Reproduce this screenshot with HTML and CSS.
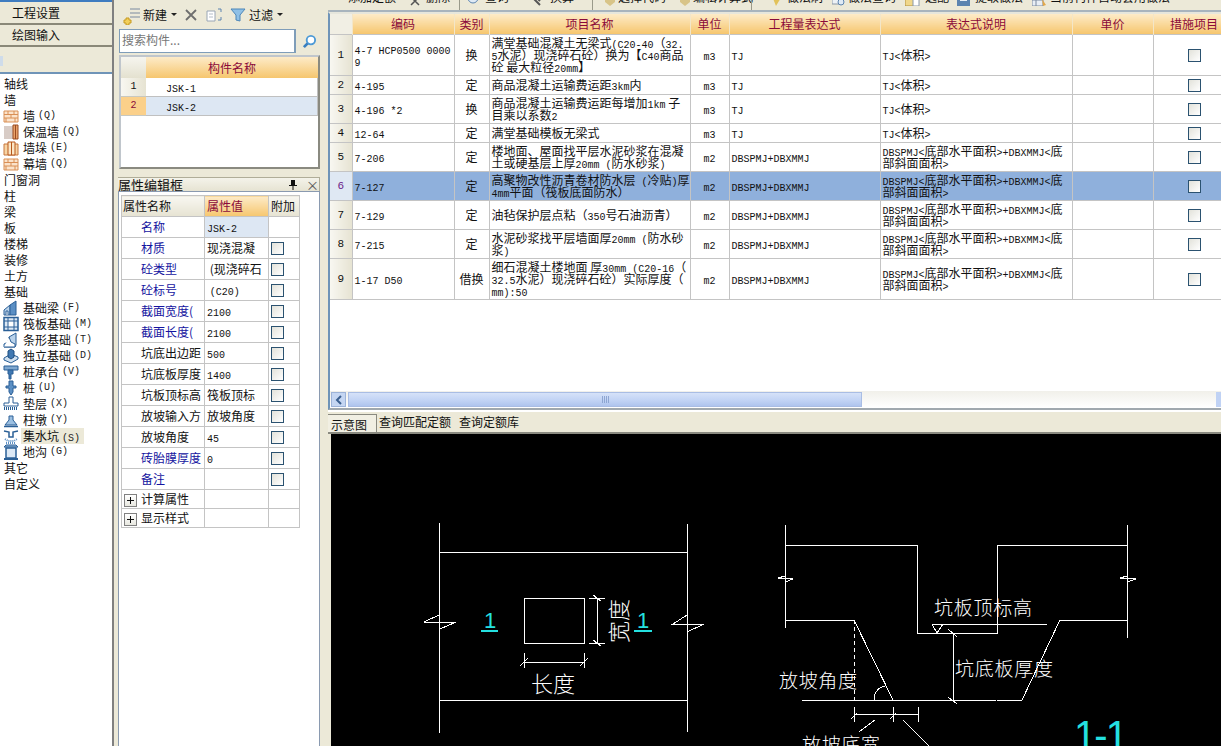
FILE: index.html
```html
<!DOCTYPE html>
<html lang="zh">
<head>
<meta charset="utf-8">
<title>集水坑</title>
<link rel="stylesheet" href="styles.css">
</head>
<body>
<div class="app">
<aside class="left">
  <div class="nav-tab nav-tab-a">工程设置</div>
  <div class="nav-tab nav-tab-b">绘图输入</div>
  <div class="nav-band"><span class="nav-mini"></span></div>
  <ul class="tree">
    <li>轴线</li>
    <li>墙</li>
    <li class="sub"><svg class="ti" viewBox="0 0 16 16"><path d="M1 3h14v11H1z" fill="#fbe3cb" stroke="#d98f55"/><path d="M1 6.500h14M1 10h14M5 3v3.500M11 3v3.500M8 6.500V10M3 10v4M12 10v4" stroke="#d98f55" fill="none"/></svg>墙<span class="k">(Q)</span></li>
    <li class="sub"><svg class="ti" viewBox="0 0 16 16"><path d="M1 2h9v13H1z" fill="#d8ccc6"/><path d="M10 1h5v14h-5z" fill="#e8a26a" stroke="#9a4a20"/><path d="M12.500 1v14" stroke="#9a4a20"/></svg>保温墙<span class="k">(Q)</span></li>
    <li class="sub"><svg class="ti" viewBox="0 0 16 16"><path d="M1 4h14v11H1z" fill="#f7d4a4" stroke="#c8763c"/><path d="M5 2h7v13H5z" fill="#fbe6c6" stroke="#b8581c"/><path d="M8.500 2v13" stroke="#b8581c"/></svg>墙垛<span class="k">(E)</span></li>
    <li class="sub"><svg class="ti" viewBox="0 0 16 16"><path d="M1 3h14v11H1z" fill="#fbe3cb" stroke="#d98f55"/><path d="M1 6.500h14M1 10h14M5 3v3.500M11 3v3.500M8 6.500V10M3 10v4M12 10v4" stroke="#d98f55" fill="none"/></svg>幕墙<span class="k">(Q)</span></li>
    <li>门窗洞</li>
    <li>柱</li>
    <li>梁</li>
    <li>板</li>
    <li>楼梯</li>
    <li>装修</li>
    <li>土方</li>
    <li>基础</li>
    <li class="sub"><svg class="ti" viewBox="0 0 16 16"><path d="M1 15V10L7 5V15z" fill="#b9d2ea" stroke="#2a5f96"/><path d="M7 5L13 1v14H7z" fill="#5b8fc4" stroke="#2a5f96"/><path d="M3 15v-4h2v4" fill="#fff" stroke="#2a5f96"/></svg>基础梁<span class="k">(F)</span></li>
    <li class="sub"><svg class="ti" viewBox="0 0 16 16"><path d="M1 1.500h14v13H1z" fill="#dbe8f5" stroke="#2a5f96" stroke-width="1.500"/><path d="M5 5h6v6H5z" fill="#fff" stroke="#2a5f96"/><path d="M1 5h4M11 5h4M1 11h4M11 11h4M5 1v4M11 1v4M5 11v4M11 11v4" stroke="#2a5f96"/></svg>筏板基础<span class="k">(M)</span></li>
    <li class="sub"><svg class="ti" viewBox="0 0 16 16"><path d="M1 15v-3l4-2 1-5 7-4v12l-1 2z" fill="#b9d2ea" stroke="#2a5f96"/><path d="M6 5l2 5 4 2v3H1" fill="#fff" stroke="#2a5f96"/></svg>条形基础<span class="k">(T)</span></li>
    <li class="sub"><svg class="ti" viewBox="0 0 16 16"><path d="M1 10l7-4 7 3v2l-7 4-7-3z" fill="#cfe0f0" stroke="#2a5f96"/><path d="M5 3l3-2 3 2v6l-3 2-3-2z" fill="#3f78b2" stroke="#1f4e80"/></svg>独立基础<span class="k">(D)</span></li>
    <li class="sub"><svg class="ti" viewBox="0 0 16 16"><path d="M1 2h14v4H1z" fill="#7fa8d0" stroke="#2a5f96"/><path d="M5 6h5v4H8v5H6v-5H5z" fill="#3f78b2" stroke="#2a5f96"/></svg>桩承台<span class="k">(V)</span></li>
    <li class="sub"><svg class="ti" viewBox="0 0 16 16"><path d="M6 1h4v5h3v2h-3v4l-2 3-2-3V8H3V6h3z" fill="#5b8fc4" stroke="#2a5f96"/></svg>桩<span class="k">(U)</span></li>
    <li class="sub"><svg class="ti" viewBox="0 0 16 16"><path d="M6 1h4v6h5v3H1V7h5z" fill="#fff" stroke="#2a5f96"/><path d="M1 12.500h14" stroke="#2a5f96" stroke-dasharray="1 1" stroke-width="3"/></svg>垫层<span class="k">(X)</span></li>
    <li class="sub"><svg class="ti" viewBox="0 0 16 16"><path d="M6 4h4v4l4 5H2l4-5z" fill="#9cc0e2" stroke="#2a5f96"/><path d="M1 14.500h14" stroke="#2a5f96" stroke-width="1.500"/></svg>柱墩<span class="k">(Y)</span></li>
    <li class="sub"><svg class="ti" viewBox="0 0 16 16"><path d="M1 3l5 1v5h4V4l5-1" fill="none" stroke="#2a5f96" stroke-width="1.500"/><path d="M2 11l3 2h6l3-2M3 15h10" stroke="#5b8fc4" stroke-dasharray="1 1" stroke-width="2" fill="none"/></svg><span class="sel">集水坑<span class="k">(S)</span></span></li>
    <li class="sub"><svg class="ti" viewBox="0 0 16 16"><path d="M1 3h14l-2-2H3z" fill="#8fb4d8" stroke="#2a5f96"/><path d="M3 4h10v10H3z" fill="#dbe8f5" stroke="#2a5f96" stroke-width="1.500"/><path d="M1 15h14" stroke="#2a5f96" stroke-width="2"/></svg>地沟<span class="k">(G)</span></li>
    <li>其它</li>
    <li>自定义</li>
  </ul>
</aside>

<section class="mid">
  <div class="mid-tools">
    <svg class="mi" viewBox="0 0 18 18"><path d="M7 2h10M7 6h10M7 10h10" stroke="#7a8aa0" fill="none"/><path d="M3 11h3v2h2v3H6v2H3v-2H1v-3h2z" fill="#f2cf5a" stroke="#c79a20"/></svg>
    <span class="mi-label">新建</span><span class="caret"></span>
    <svg class="mi-x" viewBox="0 0 12 12"><path d="M1 1l10 10M11 1L1 11" stroke="#6e6e6e" stroke-width="1.800"/></svg>
    <svg class="mi-c" viewBox="0 0 16 14"><path d="M1 3h8v10H1z" fill="#fff" stroke="#9aa6b5"/><path d="M3 6h4M3 9h4" stroke="#b5bdc8"/><path d="M12 1h3v3M12 12h3V9" stroke="#5c84b0" fill="none"/></svg>
    <svg class="mi-f" viewBox="0 0 16 14"><path d="M1 1h14L10 7v6l-4-1V7z" fill="#8fc0e6" stroke="#4d86b8"/></svg>
    <span class="mi-label mi-label-f">过滤</span><span class="caret"></span>
  </div>
  <div class="search">
    <div class="search-box">搜索构件...</div>
    <svg class="search-ico" viewBox="0 0 16 16"><circle cx="9.500" cy="6.500" r="4.500" fill="#fff" stroke="#4d9ad6" stroke-width="2"/><path d="M6 10l-4 4" stroke="#3a7fc0" stroke-width="3"/></svg>
  </div>
  <div class="list-panel">
    <div class="list-head"><div class="list-corner"></div><div class="list-title">构件名称</div></div>
    <div class="list-row"><div class="list-n">1</div><div class="list-v"><span class="m">JSK-1</span></div></div>
    <div class="list-row on"><div class="list-n">2</div><div class="list-v"><span class="m">JSK-2</span></div></div>
  </div>
  <div class="cap"><span class="cap-t">属性编辑框</span><svg class="cap-pin" viewBox="0 0 8 10"><path d="M2 0h4v5h2v1H0V5h2zM3.500 6h1v4h-1z" fill="#111"/></svg><span class="cap-x">×</span></div>
  <div class="prop-panel">
    <table class="prop">
      <colgroup><col class="pc1"><col class="pc2"><col class="pc3"></colgroup>
      <tr class="ph"><th class="ph1">属性名称</th><th class="ph2">属性值</th><th class="ph3">附加</th></tr>
      <tr><td class="pn b">名称</td><td class="pv on"><span class="m">JSK-2</span></td><td></td></tr>
      <tr><td class="pn b">材质</td><td class="pv">现浇混凝</td><td><i class="cb"></i></td></tr>
      <tr><td class="pn b">砼类型</td><td class="pv">&nbsp;(现浇碎石</td><td><i class="cb"></i></td></tr>
      <tr><td class="pn b">砼标号</td><td class="pv">&nbsp;<span class="m">(C20)</span></td><td><i class="cb"></i></td></tr>
      <tr><td class="pn b">截面宽度(</td><td class="pv"><span class="m">2100</span></td><td><i class="cb"></i></td></tr>
      <tr><td class="pn b">截面长度(</td><td class="pv"><span class="m">2100</span></td><td><i class="cb"></i></td></tr>
      <tr><td class="pn">坑底出边距</td><td class="pv"><span class="m">500</span></td><td><i class="cb"></i></td></tr>
      <tr><td class="pn">坑底板厚度</td><td class="pv"><span class="m">1400</span></td><td><i class="cb"></i></td></tr>
      <tr><td class="pn">坑板顶标高</td><td class="pv">筏板顶标</td><td><i class="cb"></i></td></tr>
      <tr><td class="pn">放坡输入方</td><td class="pv">放坡角度</td><td><i class="cb"></i></td></tr>
      <tr><td class="pn">放坡角度</td><td class="pv"><span class="m">45</span></td><td><i class="cb"></i></td></tr>
      <tr><td class="pn b">砖胎膜厚度</td><td class="pv"><span class="m">0</span></td><td><i class="cb"></i></td></tr>
      <tr><td class="pn b">备注</td><td class="pv"></td><td><i class="cb"></i></td></tr>
      <tr class="pg"><td class="pgn"><i class="plus"></i>计算属性</td><td></td><td></td></tr>
      <tr class="pg"><td class="pgn"><i class="plus"></i>显示样式</td><td></td><td></td></tr>
    </table>
  </div>
</section>

<main class="right">
  <div class="tools">
    <span class="t t1">添加定额</span>
    <svg class="ic ic1" viewBox="0 0 10 10"><path d="M1 1l8 8M9 1L1 9" stroke="#555" stroke-width="1.500"/></svg><span class="t t2">删除</span><i class="sep s1"></i>
    <svg class="ic ic2" viewBox="0 0 14 10"><circle cx="7" cy="2" r="5" fill="#dfeaf5" stroke="#5c84b0"/></svg><span class="t t3">查询</span>
    <svg class="ic ic3b" viewBox="0 0 10 10"><path d="M1 1l8 8M5 1l4 4" stroke="#555" stroke-width="2"/></svg><span class="t t4">换算</span><i class="sep s2"></i>
    <svg class="ic ic3" viewBox="0 0 10 10"><path d="M0 0h10v6l-5 4-5-4z" fill="#d8c488"/></svg><span class="t t5">选择代码</span>
    <svg class="ic ic3" viewBox="0 0 10 10"><path d="M0 0h10v6l-5 4-5-4z" fill="#d8c488"/></svg><span class="t t6">编辑计算式</span><i class="sep s3"></i>
    <svg class="ic ic5" viewBox="0 0 10 10"><path d="M0 0h10L4 10z" fill="#e2c25a"/></svg><span class="t t7">做法刷</span>
    <svg class="ic ic6" viewBox="0 0 13 10"><path d="M0 0h9v8H0z" fill="#eef2f6" stroke="#8a98a8"/><circle cx="9" cy="6" r="3" fill="#dfeaf5" stroke="#5c84b0"/></svg><span class="t t8">做法查询</span>
    <svg class="ic ic8" viewBox="0 0 15 10"><path d="M0 2h9v8H0z" fill="#f0d78a" stroke="#b09040"/><path d="M8 0h6v10H8z" fill="#fff" stroke="#8a98a8"/></svg><span class="t t9">选配</span>
    <svg class="ic ic7" viewBox="0 0 15 10"><path d="M0 0h13v10H0z" fill="#5c84b0"/><path d="M3 0h7v5H3z" fill="#e8eef5"/></svg><span class="t t10">提取做法</span>
    <svg class="ic ic7" viewBox="0 0 15 10"><path d="M0 0h11v10H0z" fill="#e8eef5" stroke="#7a8aa0"/><path d="M0 4h11M4 0v10" stroke="#7a8aa0"/><path d="M10 3l4 6-3 1z" fill="#e2a84a"/></svg><span class="t">当前构件自动套用做法</span>
  </div>
  <div class="grid-wrap">
    <table class="grid">
      <colgroup><col class="c0"><col class="c1"><col class="c2"><col class="c3"><col class="c4"><col class="c5"><col class="c6"><col class="c7"><col class="c8"></colgroup>
      <thead><tr><th class="corner"></th><th>编码</th><th>类别</th><th>项目名称</th><th>单位</th><th>工程量表达式</th><th>表达式说明</th><th>单价</th><th>措施项目</th></tr></thead>
      <tbody>
      <tr class="r41"><td class="n">1</td><td><span class="m">4-7 HCP0500 0000<br>9</span></td><td class="c">换</td><td>满堂基础混凝土无梁式<span class="m">(C20-40</span>（<span class="m">32.</span><br><span class="m">5</span>水泥）现浇碎石砼）换为【<span class="m">C40</span>商品<br>砼 最大粒径<span class="m">20mm</span>】</td><td class="c"><span class="m">m3</span></td><td><span class="m">TJ</span></td><td><span class="m">TJ&lt;</span>体积<span class="m">&gt;</span></td><td></td><td class="c"><i class="cb"></i></td></tr>
      <tr class="r19"><td class="n">2</td><td><span class="m">4-195</span></td><td class="c">定</td><td>商品混凝土运输费运距<span class="m">3km</span>内</td><td class="c"><span class="m">m3</span></td><td><span class="m">TJ</span></td><td><span class="m">TJ&lt;</span>体积<span class="m">&gt;</span></td><td></td><td class="c"><i class="cb"></i></td></tr>
      <tr class="r29"><td class="n">3</td><td><span class="m">4-196 *2</span></td><td class="c">换</td><td>商品混凝土运输费运距每增加<span class="m">1km</span> 子<br>目乘以系数<span class="m">2</span></td><td class="c"><span class="m">m3</span></td><td><span class="m">TJ</span></td><td><span class="m">TJ&lt;</span>体积<span class="m">&gt;</span></td><td></td><td class="c"><i class="cb"></i></td></tr>
      <tr class="r19"><td class="n">4</td><td><span class="m">12-64</span></td><td class="c">定</td><td>满堂基础模板无梁式</td><td class="c"><span class="m">m3</span></td><td><span class="m">TJ</span></td><td><span class="m">TJ&lt;</span>体积<span class="m">&gt;</span></td><td></td><td class="c"><i class="cb"></i></td></tr>
      <tr class="r29"><td class="n">5</td><td><span class="m">7-206</span></td><td class="c">定</td><td>楼地面、屋面找平层水泥砂浆在混凝<br>土或硬基层上厚<span class="m">20mm (</span>防水砂浆<span class="m">)</span></td><td class="c"><span class="m">m2</span></td><td><span class="m">DBSPMJ+DBXMMJ</span></td><td><span class="m">DBSPMJ&lt;</span>底部水平面积<span class="m">&gt;+DBXMMJ&lt;</span>底<br>部斜面面积<span class="m">&gt;</span></td><td></td><td class="c"><i class="cb"></i></td></tr>
      <tr class="r29 hl"><td class="n">6</td><td><span class="m">7-127</span></td><td class="c">定</td><td>高聚物改性沥青卷材防水层<span class="m"> (</span>冷贴<span class="m">)</span>厚<br><span class="m">4mm</span>平面（筏板底面防水）</td><td class="c"><span class="m">m2</span></td><td><span class="m">DBSPMJ+DBXMMJ</span></td><td><span class="m">DBSPMJ&lt;</span>底部水平面积<span class="m">&gt;+DBXMMJ&lt;</span>底<br>部斜面面积<span class="m">&gt;</span></td><td></td><td class="c"><i class="cb"></i></td></tr>
      <tr class="r29"><td class="n">7</td><td><span class="m">7-129</span></td><td class="c">定</td><td>油毡保护层点粘（<span class="m">350</span>号石油沥青）</td><td class="c"><span class="m">m2</span></td><td><span class="m">DBSPMJ+DBXMMJ</span></td><td><span class="m">DBSPMJ&lt;</span>底部水平面积<span class="m">&gt;+DBXMMJ&lt;</span>底<br>部斜面面积<span class="m">&gt;</span></td><td></td><td class="c"><i class="cb"></i></td></tr>
      <tr class="r29"><td class="n">8</td><td><span class="m">7-215</span></td><td class="c">定</td><td>水泥砂浆找平层墙面厚<span class="m">20mm (</span>防水砂<br>浆<span class="m">)</span></td><td class="c"><span class="m">m2</span></td><td><span class="m">DBSPMJ+DBXMMJ</span></td><td><span class="m">DBSPMJ&lt;</span>底部水平面积<span class="m">&gt;+DBXMMJ&lt;</span>底<br>部斜面面积<span class="m">&gt;</span></td><td></td><td class="c"><i class="cb"></i></td></tr>
      <tr class="r41"><td class="n">9</td><td><span class="m">1-17 D50</span></td><td class="c">借换</td><td>细石混凝土楼地面 厚<span class="m">30mm (C20-16</span>（<br><span class="m">32.5</span>水泥）现浇碎石砼）实际厚度（<br><span class="m">mm):50</span></td><td class="c"><span class="m">m2</span></td><td><span class="m">DBSPMJ+DBXMMJ</span></td><td><span class="m">DBSPMJ&lt;</span>底部水平面积<span class="m">&gt;+DBXMMJ&lt;</span>底<br>部斜面面积<span class="m">&gt;</span></td><td></td><td class="c"><i class="cb"></i></td></tr>
      </tbody>
    </table>
  </div>
  <div class="hscroll">
    <div class="hs-btn"><svg viewBox="0 0 8 10" class="hs-arrow"><path d="M6 1L2 5l4 4" fill="none" stroke="#3a5f8f" stroke-width="2"/></svg></div>
    <div class="hs-thumb"><span class="grip"></span></div>
    <div class="hs-track"></div>
    <div class="hs-end"></div>
  </div>
  <div class="tabs"><span class="tab on">示意图</span><span class="tab tab2">查询匹配定额</span><span class="tab">查询定额库</span></div>
  <svg class="cad" viewBox="331 434 890 312">
    <g class="ln">
      <path d="M439 523V733M687 524V732M439 552H687M439 700H687M524 598H584V643H524Z"/>
      <path d="M439 615L424 622H456L440 629M687 615L673 624H704L687 632"/>
      <path d="M597 598V643M589 598H605M589 643H605M593 595l8 6M593 640l8 6"/>
      <path d="M524 662H584M524 653V668M584 653V668M520 666l8-8M580 666l8-8"/>
      <path d="M785 525V628M1127 525V638M785 545H917V633H997V545H1127"/>
      <path d="M785 620H854L893 700M802 700H996M997 700H1022L1060 620H1127"/>
      <path d="M854 620V700" stroke-dasharray="4 3"/>
      <path d="M932 624H1047M932 624L937 633L943 624M953 633V700M948 629l9 8M948 697l9 7"/>
      <path d="M874 700C874 692 879 687 885 686"/>
      <path d="M854 714H918M854 707V722M893 707V722M918 707V722M851 719l6-6M890 719l6-6M875 720L859 732M903 720L929 746"/>
      <path d="M785 576L778 578L793 579L785 582M1127 576L1120 578L1136 579L1127 582"/>
    </g>
    <g class="cy">
      <path d="M481 631H498M634 631H652"/>
    </g>
    <text class="cy-t" x="484" y="628">1</text>
    <text class="cy-t" x="637" y="628">1</text>
    <text class="cy-big" x="1074" y="749" textLength="54">1-1</text>
    <text class="wt" x="531" y="692">长度</text>
    <text class="wt" transform="translate(627 643) rotate(-90)">宽度</text>
    <text class="wt sm" x="934" y="615" textLength="98">坑板顶标高</text>
    <text class="wt sm" x="955" y="676" textLength="98">坑底板厚度</text>
    <text class="wt sm" x="779" y="688" textLength="78">放坡角度</text>
    <text class="wt sm" x="802" y="752" textLength="78">放坡底宽</text>
  </svg>
</main>
</div>
</body>
</html>
```
FILE: styles.css
```css
* { box-sizing: border-box; }
html, body { margin: 0; height: 100%; overflow: hidden; }
body { background: #ece9d8; font: 12px/16px "Noto Sans CJK SC", "Liberation Sans", sans-serif; color: #111; }
.app { display: flex; width: 1221px; height: 746px; overflow: hidden; }
.m { font-family: "Liberation Mono", monospace; font-size: 10px; line-height: 0; }
.k { font-family: "Liberation Mono", monospace; font-size: 10px; color: #222; margin-left: 3px; }
i { display: inline-block; }

.left { width: 114px; flex: none; display: flex; flex-direction: column; border-right: 2px solid #808080; }
.nav-tab { display: flex; align-items: center; padding-left: 12px; border-bottom: 2px solid #8a8878; background: #ece9d8; }
.nav-tab-a { height: 25px; border-top: 2px solid #3f7cc0; }
.nav-tab-b { height: 22px; }
.nav-band { height: 27px; background: #ece9d8; border-bottom: 2px solid #6f94b8; }
.nav-mini { display: block; width: 3px; height: 10px; margin-top: 9px; background: #cfdcea; }
.tree { list-style: none; margin: 0; padding: 2px 0 0 4px; background: #fff; flex: 1; }
.tree li { height: 16px; line-height: 16px; white-space: nowrap; display: flex; align-items: center; }
.tree li.sub { margin-left: -1px; }
.ti { width: 16px; height: 16px; flex: none; margin-right: 4px; }
.sel { background: #ece9d8; padding: 0 4px 0 2px; margin-left: -2px; height: 16px; }

.mid { width: 202px; margin-left: 4px; flex: none; display: flex; flex-direction: column; }
.mid-tools { height: 29px; display: flex; align-items: center; padding-left: 5px; }
.mi { width: 18px; height: 18px; margin-top: 3px; }
.mi-label { margin-left: 2px; }
.mi-label-f { margin-left: 3px; }
.caret { width: 0; height: 0; margin-left: 4px; border: 3px solid transparent; border-top-color: #222; border-bottom: 0; }
.mi-x { width: 12px; height: 12px; margin-left: 8px; }
.mi-c { width: 16px; height: 14px; margin-left: 9px; }
.mi-f { width: 16px; height: 14px; margin-left: 8px; }
.search { height: 24px; display: flex; align-items: center; margin-left: 1px; }
.search-box { width: 177px; height: 24px; background: #fff; border: 1px solid #7f9db9; border-right-width: 2px; padding: 2px; color: #777; }
.search-ico { width: 15px; height: 15px; margin-left: 6px; }
.list-panel { margin: 2px 0 0 1px; height: 114px; border: 2px solid; border-color: #c0c6cc #8a8a80 #8a8a80 #c0c6cc; background: #fff; }
.list-head { display: flex; height: 21px; }
.list-corner { width: 25px; background: linear-gradient(#f6f5ef, #e4e1cf); }
.list-title { width: 172px; text-align: center; line-height: 21px; color: #8b0a3a; background: linear-gradient(#fdebc8, #f6c66e); }
.list-row { display: flex; height: 19px; }
.list-n { width: 25px; text-align: center; line-height: 18px; background: linear-gradient(90deg, #f8f7f1, #e6e3d2); border-bottom: 1px solid #c8c8c0; font-family: "Liberation Mono", monospace; font-size: 10px; }
.list-v { width: 172px; padding-left: 20px; line-height: 18px; border: solid #c0c0c0; border-width: 0 1px 1px 0; }
.list-row.on .list-n { background: #fbd08a; color: #8b0a3a; }
.list-row.on .list-v { background: #dde7f3; }

.cap { margin-top: 8px; height: 14px; display: flex; align-items: center; border: 1px solid #b0ad98; border-width: 1px 1px 0 0; background: linear-gradient(#f4f3ea, #e6e3d2); font-size: 13px; line-height: 13px; padding-right: 3px; }
.cap-t { flex: 1; }
.cap-pin { width: 8px; height: 10px; margin-right: 9px; }
.cap-x { width: 10px; color: #555; font-size: 13px; }
.prop-panel { flex: 1; background: #fff; border: 1px solid #8a9ab0; border-width: 1px 1px 0 1px; padding: 3px 0 0 2px; }
.prop { border-collapse: collapse; table-layout: fixed; width: 178px; }
.pc1 { width: 83px; } .pc2 { width: 64px; } .pc3 { width: 31px; }
.prop td, .prop th { border: 1px solid #c4c4c4; height: 21px; padding: 0; line-height: 14px; white-space: nowrap; overflow: hidden; }
.prop th { font-weight: normal; text-align: left; background: linear-gradient(#f8f7f1, #e6e3d2); }
.prop .ph1 { padding-left: 1px; }
.prop .ph2 { background: linear-gradient(#fdebc8, #f6c66e); color: #8b0a3a; padding-left: 2px; }
.prop .ph3 { padding-left: 2px; }
.prop .pn { padding-left: 19px; }
.prop .pn.b { color: #1414a0; }
.prop .pv { padding-left: 2px; }
.prop .pv.on { background: #dde7f3; }
.prop .pg td { height: 19px; }
.prop .pgn { padding-left: 2px; }
.plus { width: 13px; height: 13px; margin-right: 4px; vertical-align: -3px; border: 1px solid #808080; background: linear-gradient(#fff, #e8e8e0); position: relative; }
.plus::before { content: ""; position: absolute; left: 2px; right: 2px; top: 5px; height: 1px; background: #111; }
.plus::after { content: ""; position: absolute; top: 2px; bottom: 2px; left: 5px; width: 1px; background: #111; }
.cb { display: block; width: 13px; height: 13px; margin: 1px auto 0; border: 1px solid #2b5270; background: linear-gradient(135deg, #e2e2da, #fff); }
.prop .cb { margin-left: 2px; }

.right { margin-left: 8px; flex: none; width: 893px; display: flex; flex-direction: column; }
.tools { height: 12px; display: flex; align-items: flex-end; overflow: hidden; border-bottom: 2px solid #a8b4bd; white-space: nowrap; padding-left: 20px; flex: none; }
.t { line-height: 16px; flex: none; margin-bottom: 5px; }
.t1 { width: 53px; }
.t2 { width: 33px; }
.t3 { width: 46px; }
.t4 { width: 42px; }
.t5 { width: 62px; }
.t6 { width: 58px; }
.t7 { width: 45px; }
.t8 { width: 57px; }
.t9 { width: 32px; }
.t10 { width: 57px; }
.ic { flex: none; height: 10px; margin-bottom: 4px; }
.ic1 { width: 10px; margin-left: 9px; margin-right: 6px; }
.ic2 { width: 14px; margin-left: 6px; margin-right: 5px; }
.ic3 { width: 10px; margin-right: 3px; }
.ic3b { width: 10px; margin-right: 9px; }
.ic5 { width: 10px; margin-left: 20px; margin-right: 5px; }
.ic6 { width: 13px; margin-right: 3px; }
.ic7 { width: 15px; margin-right: 3px; }
.ic8 { width: 15px; margin-right: 5px; }
.sep { width: 1px; height: 10px; background: #9a9a8a; flex: none; }
.s2 { margin-right: 12px; }
.grid-wrap { height: 379px; flex: none; background: #fff; border-left: 2px solid #6f94b8; border-top: 2px solid #e6e6dc; overflow: hidden; }
.grid { border-collapse: collapse; table-layout: fixed; width: 905px; }
.c0 { width: 22px; } .c1 { width: 102px; } .c2 { width: 35px; } .c3 { width: 201px; } .c4 { width: 39px; } .c5 { width: 151px; } .c6 { width: 192px; } .c7 { width: 81px; } .c8 { width: 82px; }
.grid th { height: 20px; padding: 0; font-weight: normal; color: #8b0a3a; background: linear-gradient(#fdebc8, #f6c66e); border-right: 1px solid #f3e6c8; text-align: center; }
.grid th.corner { background: #f1efe4; }
.grid td { padding: 0 0 0 2px; line-height: 12px; border: 1px solid #c4c4c4; border-left: 0; white-space: nowrap; overflow: hidden; vertical-align: middle; }
.grid td.c { text-align: center; padding: 0; }
.grid td.n { background: linear-gradient(90deg, #f8f7f1, #e6e3d2); text-align: center; padding: 0; font-family: "Liberation Mono", monospace; font-size: 11px; }
.r19 td { height: 19px; }
.r29 td { height: 29px; }
.r41 td { height: 41px; }
.hl td { background: #8fb0dc; }
.grid .hl td.n { background: #dfe8f3; color: #6b1a8a; }
.hscroll { height: 19px; flex: none; display: flex; align-items: flex-start; background: linear-gradient(#f1f0ea, #fff); border-left: 2px solid #6f94b8; border-bottom: 2px solid #a0a8ae; padding-top: 1px; }
.hs-btn { width: 15px; height: 15px; margin-left: 1px; background: #c5d6f2; border: 1px solid #9db3d8; display: flex; align-items: center; justify-content: center; }
.hs-arrow { width: 8px; height: 10px; }
.hs-thumb { width: 514px; height: 15px; margin-left: 2px; background: linear-gradient(#d6e2f8, #c0d2f4 60%, #aec4ee); border: 1px solid #a9bde4; display: flex; align-items: center; justify-content: center; }
.grip { width: 7px; height: 7px; background: repeating-linear-gradient(90deg, #8ea6d2 0 1px, transparent 1px 2px); }
.hs-track { flex: 1; }
.hs-end { width: 5px; height: 15px; background: #c0d2f4; }
.tabs { height: 24px; flex: none; display: flex; align-items: flex-end; gap: 5px; background: #ece9d8; border-top: 2px solid #fff; border-bottom: 2px solid #8a8a80; }
.tab { height: 18px; line-height: 15px; flex: none; }
.tab2 { margin-right: 3px; }
.tab.on { width: 49px; padding-left: 3px; line-height: 19px; margin-right: -3px; background: #f1efe3; border-right: 1px solid #8a8a80; border-top: 1px solid #8a8a80; }
.cad { display: block; width: 890px; height: 312px; margin-left: 3px; background: #000; flex: none; }
.ln path { fill: none; stroke: #fff; stroke-width: 1; shape-rendering: crispEdges; }
.cy path { fill: none; stroke: #24e0e0; stroke-width: 2; shape-rendering: crispEdges; }
.cy-t { fill: #24e0e0; font: 22px "Liberation Sans", sans-serif; }
.cy-big { fill: #24e0e0; font: 40px "Liberation Sans", sans-serif; }
.wt { fill: #fff; font: 22px "Noto Sans CJK SC", sans-serif; font-weight: 300; }
.wt.sm { font-size: 19px; }
```
